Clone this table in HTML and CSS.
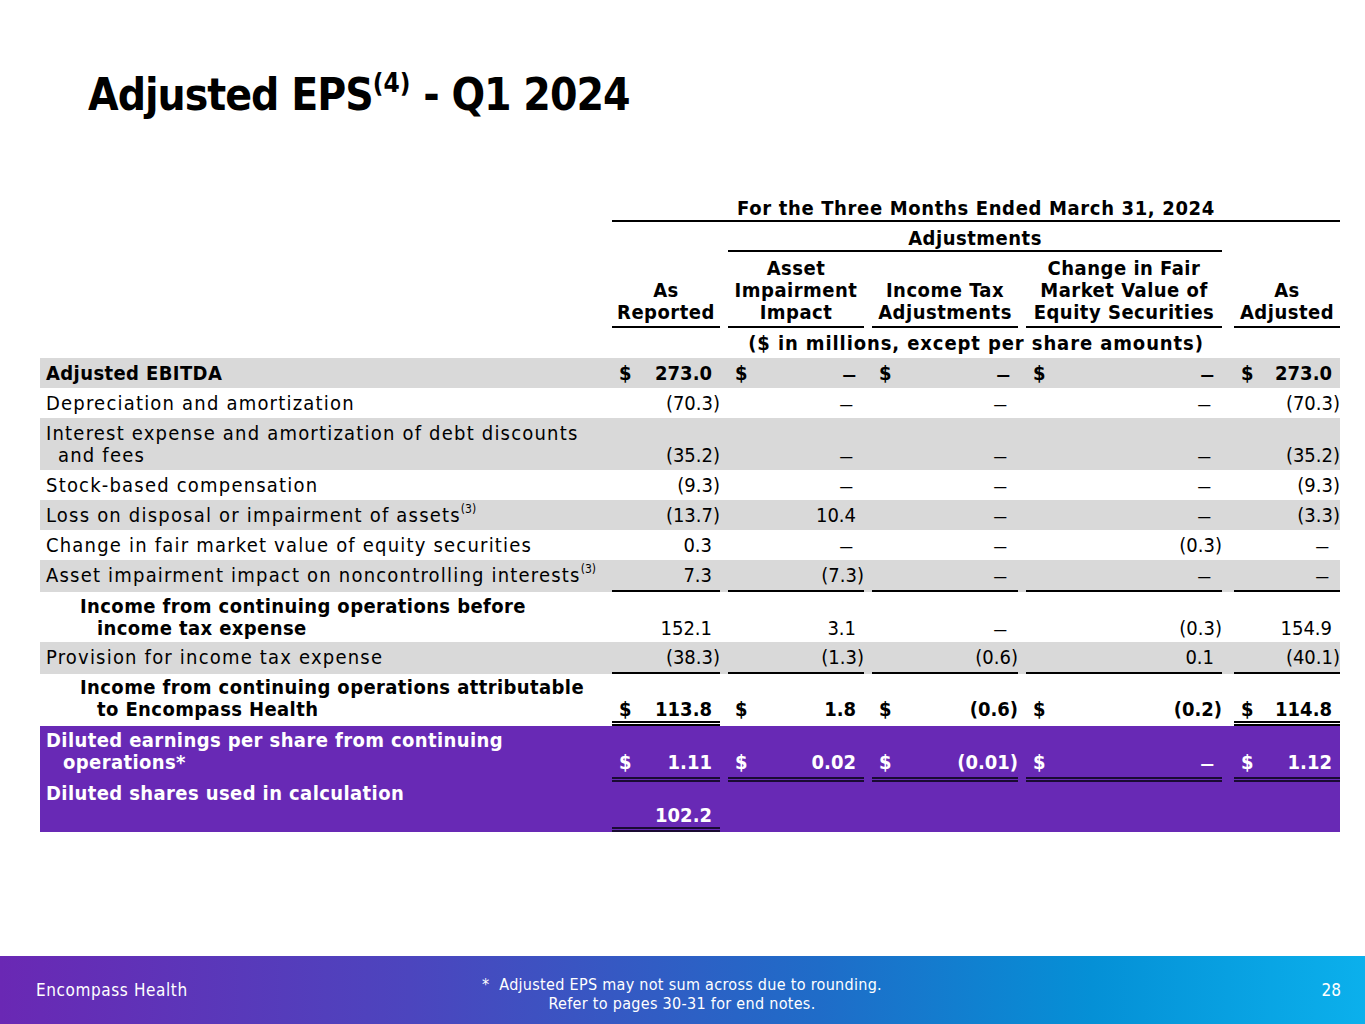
FILE: index.html
```html
<!DOCTYPE html>
<html lang="en">
<head>
<meta charset="utf-8">
<title>Adjusted EPS - Q1 2024</title>
<link rel="stylesheet" href="styles.css">
</head>
<body>
<div class="page">
  <h1 class="title">Adjusted EPS<sup>(4)</sup> - Q1 2024</h1>

  <table class="eps">
    <colgroup>
      <col class="c-label"><col class="c-1"><col class="c-g"><col class="c-2"><col class="c-g"><col class="c-3"><col class="c-g"><col class="c-4"><col class="c-g2"><col class="c-5">
    </colgroup>
    <tbody>
      <tr class="h-top">
        <td></td>
        <td colspan="9" class="hd rule">For the Three Months Ended March 31, 2024</td>
      </tr>
      <tr class="h-adj">
        <td></td><td></td><td></td>
        <td colspan="5" class="hd rule">Adjustments</td>
        <td></td><td></td>
      </tr>
      <tr class="h-cols">
        <td></td>
        <td class="hd rule">As<br>Reported</td><td></td>
        <td class="hd rule">Asset<br>Impairment<br>Impact</td><td></td>
        <td class="hd rule">Income Tax<br>Adjustments</td><td></td>
        <td class="hd rule">Change in Fair<br>Market Value of<br>Equity Securities</td><td></td>
        <td class="hd rule">As<br>Adjusted</td>
      </tr>
      <tr class="h-units">
        <td></td>
        <td colspan="9" class="hd units">($ in millions, except per share amounts)</td>
      </tr>

      <tr class="row gray bold">
        <td class="lbl">Adjusted EBITDA</td>
        <td class="num"><span class="cur">$</span><span class="v p">273.0</span></td><td></td>
        <td class="num"><span class="cur">$</span><span class="v dash">—</span></td><td></td>
        <td class="num"><span class="cur">$</span><span class="v dash">—</span></td><td></td>
        <td class="num"><span class="cur">$</span><span class="v dash">—</span></td><td></td>
        <td class="num"><span class="cur">$</span><span class="v p">273.0</span></td>
      </tr>
      <tr class="row">
        <td class="lbl">Depreciation and amortization</td>
        <td class="num"><span class="v">(70.3)</span></td><td></td>
        <td class="num"><span class="v dash">—</span></td><td></td>
        <td class="num"><span class="v dash">—</span></td><td></td>
        <td class="num"><span class="v dash">—</span></td><td></td>
        <td class="num"><span class="v">(70.3)</span></td>
      </tr>
      <tr class="row gray two">
        <td class="lbl hang">Interest expense and amortization of debt discounts<br>and fees</td>
        <td class="num"><span class="v">(35.2)</span></td><td></td>
        <td class="num"><span class="v dash">—</span></td><td></td>
        <td class="num"><span class="v dash">—</span></td><td></td>
        <td class="num"><span class="v dash">—</span></td><td></td>
        <td class="num"><span class="v">(35.2)</span></td>
      </tr>
      <tr class="row">
        <td class="lbl">Stock-based compensation</td>
        <td class="num"><span class="v">(9.3)</span></td><td></td>
        <td class="num"><span class="v dash">—</span></td><td></td>
        <td class="num"><span class="v dash">—</span></td><td></td>
        <td class="num"><span class="v dash">—</span></td><td></td>
        <td class="num"><span class="v">(9.3)</span></td>
      </tr>
      <tr class="row gray">
        <td class="lbl">Loss on disposal or impairment of assets<sup>(3)</sup></td>
        <td class="num"><span class="v">(13.7)</span></td><td></td>
        <td class="num"><span class="v p">10.4</span></td><td></td>
        <td class="num"><span class="v dash">—</span></td><td></td>
        <td class="num"><span class="v dash">—</span></td><td></td>
        <td class="num"><span class="v">(3.3)</span></td>
      </tr>
      <tr class="row">
        <td class="lbl">Change in fair market value of equity securities</td>
        <td class="num"><span class="v p">0.3</span></td><td></td>
        <td class="num"><span class="v dash">—</span></td><td></td>
        <td class="num"><span class="v dash">—</span></td><td></td>
        <td class="num"><span class="v">(0.3)</span></td><td></td>
        <td class="num"><span class="v dash">—</span></td>
      </tr>
      <tr class="row gray rule-row">
        <td class="lbl">Asset impairment impact on noncontrolling interests<sup>(3)</sup></td>
        <td class="num rule"><span class="v p">7.3</span></td><td></td>
        <td class="num rule"><span class="v">(7.3)</span></td><td></td>
        <td class="num rule"><span class="v dash">—</span></td><td></td>
        <td class="num rule"><span class="v dash">—</span></td><td></td>
        <td class="num rule"><span class="v dash">—</span></td>
      </tr>
      <tr class="row two sub-row">
        <td class="lbl sub blbl">Income from continuing operations before<br>income tax expense</td>
        <td class="num"><span class="v p">152.1</span></td><td></td>
        <td class="num"><span class="v p">3.1</span></td><td></td>
        <td class="num"><span class="v dash">—</span></td><td></td>
        <td class="num"><span class="v">(0.3)</span></td><td></td>
        <td class="num"><span class="v p">154.9</span></td>
      </tr>
      <tr class="row gray rule-row">
        <td class="lbl">Provision for income tax expense</td>
        <td class="num rule"><span class="v">(38.3)</span></td><td></td>
        <td class="num rule"><span class="v">(1.3)</span></td><td></td>
        <td class="num rule"><span class="v">(0.6)</span></td><td></td>
        <td class="num rule"><span class="v p">0.1</span></td><td></td>
        <td class="num rule"><span class="v">(40.1)</span></td>
      </tr>
      <tr class="row two bold attr-row">
        <td class="lbl sub">Income from continuing operations attributable<br>to Encompass Health</td>
        <td class="num dbl"><span class="cur">$</span><span class="v p">113.8</span></td><td></td>
        <td class="num"><span class="cur">$</span><span class="v p">1.8</span></td><td></td>
        <td class="num"><span class="cur">$</span><span class="v">(0.6)</span></td><td></td>
        <td class="num"><span class="cur">$</span><span class="v">(0.2)</span></td><td></td>
        <td class="num dbl"><span class="cur">$</span><span class="v p">114.8</span></td>
      </tr>
      <tr class="row two purple bold eps-row">
        <td class="lbl hang2">Diluted earnings per share from continuing<br>operations*</td>
        <td class="num dbl"><span class="cur">$</span><span class="v p">1.11</span></td><td></td>
        <td class="num dbl"><span class="cur">$</span><span class="v p">0.02</span></td><td></td>
        <td class="num dbl"><span class="cur">$</span><span class="v">(0.01)</span></td><td></td>
        <td class="num dbl"><span class="cur">$</span><span class="v dash">—</span></td><td></td>
        <td class="num dbl"><span class="cur">$</span><span class="v p">1.12</span></td>
      </tr>
      <tr class="row two purple bold shares-row">
        <td class="lbl top">Diluted shares used in calculation</td>
        <td class="num dbl"><span class="v p">102.2</span></td><td></td>
        <td></td><td></td>
        <td></td><td></td>
        <td></td><td></td>
        <td></td>
      </tr>
    </tbody>
  </table>

  <footer class="footer">
    <div class="f-brand">Encompass Health</div>
    <div class="f-note">*&nbsp; Adjusted EPS may not sum across due to rounding.<br>Refer to pages 30-31 for end notes.</div>
    <div class="f-page">28</div>
  </footer>
</div>
</body>
</html>
```

FILE: styles.css
```css
html, body {
  margin: 0;
  padding: 0;
  background: #ffffff;
}

.page {
  width: 1365px;
  min-height: 1024px;
  display: flex;
  flex-direction: column;
  font-family: "DejaVu Sans Condensed", "DejaVu Sans", sans-serif;
  font-stretch: condensed;
  color: #000;
}

.title {
  margin: 68px 0 0 88px;
  font-size: 44px;
  line-height: 54px;
  font-weight: bold;
  letter-spacing: -1px;
}

.title sup {
  font-size: 26px;
  line-height: 0;
  vertical-align: 0.7em;
  letter-spacing: 0;
}

.eps {
  margin: 71px 0 0 40px;
  width: 1300px;
  table-layout: fixed;
  border-collapse: separate;
  border-spacing: 0;
  font-size: 20px;
  line-height: 22px;
}

.c-label { width: 572px; }
.c-1 { width: 108px; }
.c-2 { width: 136px; }
.c-3 { width: 146px; }
.c-4 { width: 196px; }
.c-5 { width: 106px; }
.c-g { width: 8px; }
.c-g2 { width: 12px; }

.eps td {
  padding: 0;
  vertical-align: bottom;
}

.hd {
  text-align: center;
  font-weight: bold;
  letter-spacing: 0.5px;
}

.units { letter-spacing: 0.9px; }

.rule {
  border-bottom: 2px solid #000;
}

.h-top td { padding: 4px 0 1px; }
.h-top td.hd { letter-spacing: 0.65px; }
.h-adj td { padding: 5px 0 1px; }
.h-cols td { padding: 5px 0 3px; }
.h-units td { padding: 4px 0 4px; }

.row td {
  padding-top: 4px;
  padding-bottom: 4px;
}

.rule-row td:not(.rule) {
  padding-bottom: 6px;
}

.gray { background: #d9d9d9; }

.purple {
  background: #6829b5;
  color: #fff;
}

.lbl {
  padding-left: 6px !important;
  letter-spacing: 1.2px;
}

.bold { font-weight: bold; }
.bold .lbl, .blbl {
  font-weight: bold;
  letter-spacing: 0.4px;
}

.lbl sup {
  font-size: 12px;
  line-height: 0;
  vertical-align: 0.75em;
  font-weight: normal;
  letter-spacing: 0;
}

.hang {
  padding-left: 18px !important;
  text-indent: -12px;
}

.sub {
  padding-left: 57px !important;
  text-indent: -17px;
}

.hang2 {
  padding-left: 23px !important;
  text-indent: -17px;
}

.lbl.top { vertical-align: top; }

.num {
  text-align: right;
  padding-left: 7px !important;
  white-space: nowrap;
}

.num .cur { float: left; }

.num .p {
  display: inline-block;
  padding-right: 8px;
}

.num .dash {
  display: inline-block;
  font-size: 15px;
  line-height: 12px;
  padding-right: 11px;
}

.bold .num .dash {
  padding-right: 8px;
}

.dbl {
  border-bottom: 5px double #000;
}

.purple .dbl {
  border-bottom: 5px double #1a0b33;
}

.sub-row td {
  padding-top: 3px;
  padding-bottom: 3px;
}

.attr-row td {
  padding-top: 2px;
  padding-bottom: 1px;
}

.attr-row td:not(.dbl) {
  padding-bottom: 6px;
}

.eps-row td {
  padding-top: 3px;
  padding-bottom: 4px;
}

.eps-row td:not(.dbl) {
  padding-bottom: 9px;
}

.shares-row td {
  height: 44px;
  padding-top: 0;
  padding-bottom: 1px;
}

.shares-row td:not(.dbl) {
  padding-bottom: 6px;
}

.footer {
  margin-top: auto;
  height: 68px;
  background: linear-gradient(90deg, #6a28b4 0%, #4c45be 30%, #1f6cc8 60%, #0590d6 80%, #0bb0ec 100%);
  color: #fff;
  display: grid;
  grid-template-columns: 1fr auto 1fr;
  align-items: center;
  padding: 0 24px 0 36px;
}

.f-brand {
  font-size: 17px;
  letter-spacing: 0.6px;
}

.f-note {
  text-align: center;
  font-size: 16px;
  line-height: 19px;
  letter-spacing: 0.3px;
  padding-top: 8px;
  margin-right: 13px;
}

.f-page {
  text-align: right;
  font-size: 17px;
}
```
